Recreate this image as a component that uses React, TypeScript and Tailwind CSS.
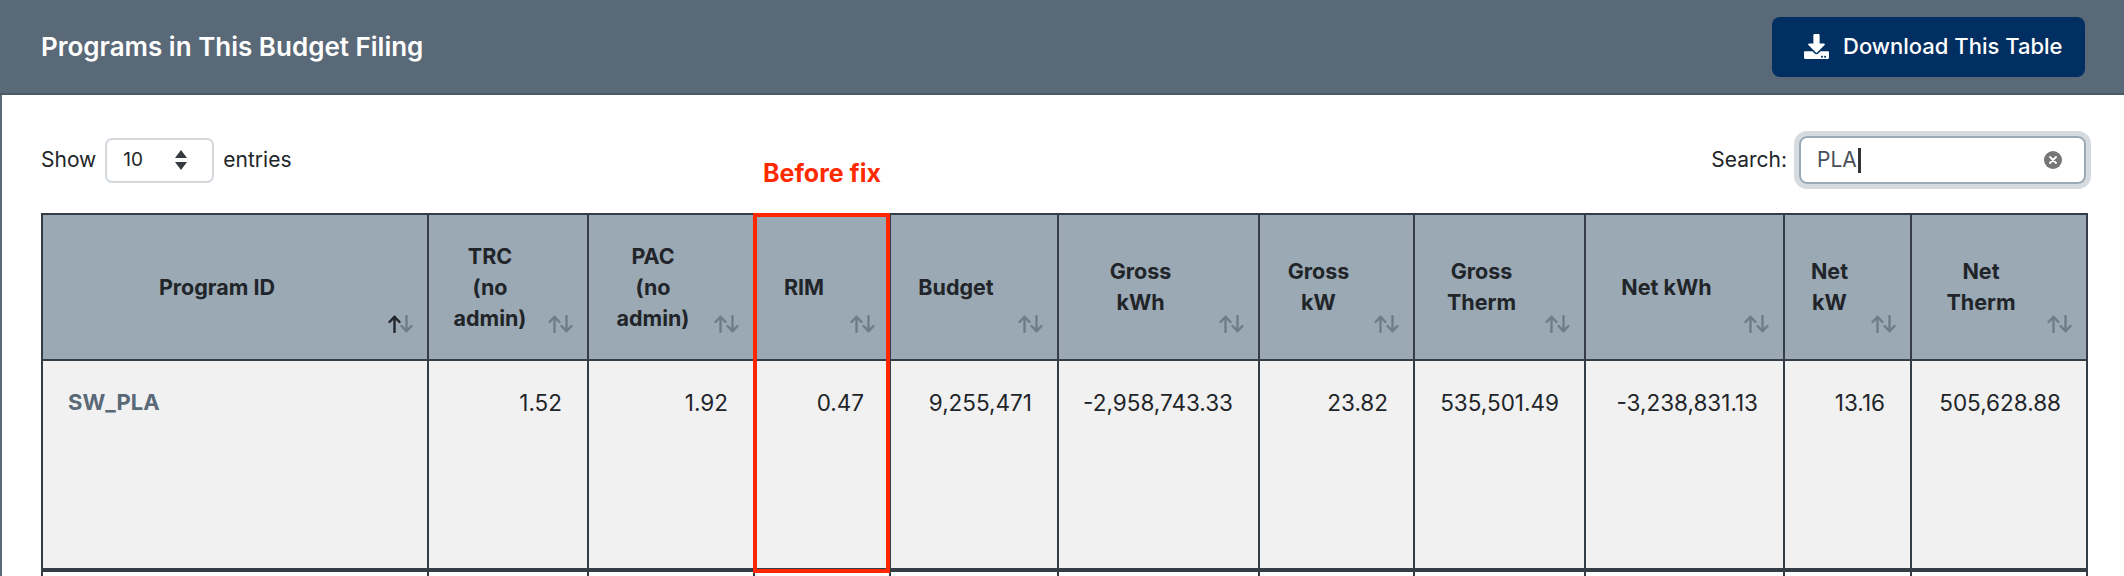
import React from "react";
import { FaDownload } from "react-icons/fa";

type Col = { key: string; label: React.ReactNode; width: number; sorted?: boolean };

const columns: Col[] = [
  { key: "id", label: "Program ID", width: 386, sorted: true },
  { key: "trc", label: <>TRC<br />(no<br />admin)</>, width: 160 },
  { key: "pac", label: <>PAC<br />(no<br />admin)</>, width: 166 },
  { key: "rim", label: "RIM", width: 136 },
  { key: "budget", label: "Budget", width: 168 },
  { key: "gkwh", label: <>Gross<br />kWh</>, width: 201 },
  { key: "gkw", label: <>Gross<br />kW</>, width: 155 },
  { key: "gtherm", label: <>Gross<br />Therm</>, width: 171 },
  { key: "nkwh", label: "Net kWh", width: 199 },
  { key: "nkw", label: <>Net<br />kW</>, width: 127 },
  { key: "ntherm", label: <>Net<br />Therm</>, width: 176 },
];

const row = [
  "1.52",
  "1.92",
  "0.47",
  "9,255,471",
  "-2,958,743.33",
  "23.82",
  "535,501.49",
  "-3,238,831.13",
  "13.16",
  "505,628.88",
];

function SortIcon({ asc }: { asc?: boolean }) {
  return (
    <svg width="25" height="18" viewBox="0 0 25 18" fill="none" strokeWidth="2.4" strokeLinecap="round" strokeLinejoin="round">
      <g stroke={asc ? "#212529" : "#6f7d89"}>
        <path d="M6.5 17V2" />
        <path d="M1.5 7L6.5 1.8L11.5 7" />
      </g>
      <g stroke="#6f7d89">
        <path d="M18.5 1V16" />
        <path d="M13.5 11L18.5 16.2L23.5 11" />
      </g>
    </svg>
  );
}

export default function App() {
  return (
    <div className="w-[2124px] h-[576px] overflow-hidden bg-white font-['Inter',sans-serif] text-[#212529]">
      <div className="h-[95px] bg-[#5a6977] border-b-2 border-[#4d5a66] flex items-center justify-between pl-[41px] pr-[39px]">
        <h2 className="text-white text-[26px] font-semibold">Programs in This Budget Filing</h2>
        <button className="h-[60px] w-[313px] rounded-[8px] bg-[#012f62] text-white flex items-center gap-[13px] pl-[31px] text-[22px] font-medium">
          <FaDownload className="w-[27px] h-[25px]" />
          Download This Table
        </button>
      </div>

      <div className="border-l-2 border-[#5a6977] pl-[39px] pr-[38px] pt-[35px]">
        <div className="h-[60px] flex items-center justify-between text-[21px]">
          <div className="flex items-center gap-[9px]">
            <span>Show</span>
            <div className="w-[109px] h-[45px] border-2 border-[#d3d8dd] rounded-[7px] flex items-center justify-between pl-[16px] pr-[24px] text-[19px]">
              <span>10</span>
              <svg width="14" height="22" viewBox="0 0 14 22" fill="#343a40">
                <path d="M7 1L13 9H1Z" />
                <path d="M7 21L13 13H1Z" />
              </svg>
            </div>
            <span>entries</span>
          </div>
          <div className="flex items-center gap-[12px]">
            <span>Search:</span>
            <div className="w-[287px] h-[48px] border-2 border-[#9ba9b5] rounded-[8px] ring-[5px] ring-[#d6dbe0] flex items-center justify-between pl-[16px] pr-[22px]">
              <div className="flex items-center text-[21px] text-[#495057]">
                <span>PLA</span>
                <span className="w-[3px] h-[25px] bg-[#333] ml-[1px]" />
              </div>
              <div className="w-[18px] h-[18px] rounded-full bg-[#767676] flex items-center justify-center">
                <svg width="8" height="8" viewBox="0 0 8 8" stroke="white" strokeWidth="1.8" strokeLinecap="round">
                  <path d="M1 1L7 7M7 1L1 7" />
                </svg>
              </div>
            </div>
          </div>
        </div>

        <div className="relative mt-[23px]">
          <span className="absolute left-[722px] -top-[58px] text-[25px] font-bold text-[#ff2a00]">Before fix</span>
          <table className="table-fixed border-collapse w-[2045px]">
            <colgroup>
              {columns.map((c) => (
                <col key={c.key} style={{ width: c.width }} />
              ))}
            </colgroup>
            <thead>
              <tr className="h-[146px] bg-[#9ba9b4]">
                {columns.map((c) => (
                  <th
                    key={c.key}
                    className="relative border-2 border-[#343d46] pl-[14px] pr-[50px] text-center align-middle text-[21.5px] leading-[31px] font-bold"
                  >
                    {c.label}
                    <span className="absolute right-[14px] bottom-[26px] flex">
                      <SortIcon asc={c.sorted} />
                    </span>
                  </th>
                ))}
              </tr>
            </thead>
            <tbody>
              <tr className="h-[210px] bg-[#f1f1f1]">
                <td className="border-2 border-b-4 border-[#343d46] align-top px-[25px] pt-[26px] text-[22px] leading-[31px] font-bold text-[#5a6977]">
                  SW_PLA
                </td>
                {row.map((v, i) => (
                  <td
                    key={i}
                    className="border-2 border-b-4 border-[#343d46] align-top pl-[20px] pr-[25px] pt-[26px] text-right text-[22.5px] leading-[31px]"
                  >
                    {v}
                  </td>
                ))}
              </tr>
              <tr className="h-[40px] bg-white">
                {columns.map((c) => (
                  <td key={c.key} className="border-2 border-[#343d46]" />
                ))}
              </tr>
            </tbody>
          </table>
          <div className="absolute left-[712px] top-0 w-[137px] h-[360px] border-4 border-[#ff2600]" />
        </div>
      </div>
    </div>
  );
}
